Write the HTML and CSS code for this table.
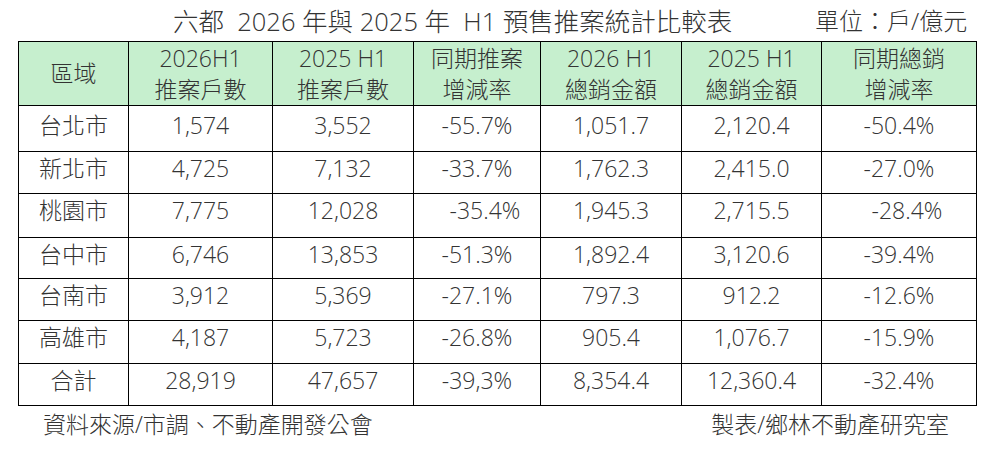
FILE: index.html
```html
<!DOCTYPE html>
<html lang="zh-Hant">
<head>
<meta charset="utf-8">
<title>六都 預售推案統計比較表</title>
<link rel="stylesheet" href="styles.css">
</head>
<body>
<div class="page">
  <div class="title-row">
    <span class="title">六都&nbsp; 2026 年與 2025 年&nbsp; H1 預售推案統計比較表</span>
    <span class="unit">單位：戶/億元</span>
  </div>
  <table class="stats">
    <colgroup>
      <col class="c-area"><col class="c1"><col class="c2"><col class="c3"><col class="c4"><col class="c5"><col class="c6">
    </colgroup>
    <thead>
      <tr>
        <th>區域</th>
        <th>2026H1<br>推案戶數</th>
        <th>2025 H1<br>推案戶數</th>
        <th>同期推案<br>增減率</th>
        <th>2026 H1<br>總銷金額</th>
        <th>2025 H1<br>總銷金額</th>
        <th>同期總銷<br>增減率</th>
      </tr>
    </thead>
    <tbody>
      <tr class="r46 first"><td>台北市</td><td>1,574</td><td>3,552</td><td>-55.7%</td><td>1,051.7</td><td>2,120.4</td><td>-50.4%</td></tr>
      <tr class="r42"><td>新北市</td><td>4,725</td><td>7,132</td><td>-33.7%</td><td>1,762.3</td><td>2,415.0</td><td>-27.0%</td></tr>
      <tr class="r44"><td>桃園市</td><td>7,775</td><td>12,028</td><td class="shift">-35.4%</td><td>1,945.3</td><td>2,715.5</td><td class="shift">-28.4%</td></tr>
      <tr class="r41"><td>台中市</td><td>6,746</td><td>13,853</td><td>-51.3%</td><td>1,892.4</td><td>3,120.6</td><td>-39.4%</td></tr>
      <tr class="r42"><td>台南市</td><td>3,912</td><td>5,369</td><td>-27.1%</td><td>797.3</td><td>912.2</td><td>-12.6%</td></tr>
      <tr class="r43"><td>高雄市</td><td>4,187</td><td>5,723</td><td>-26.8%</td><td>905.4</td><td>1,076.7</td><td>-15.9%</td></tr>
      <tr class="r42"><td>合計</td><td>28,919</td><td>47,657</td><td>-39,3%</td><td>8,354.4</td><td>12,360.4</td><td>-32.4%</td></tr>
    </tbody>
  </table>
  <div class="foot">
    <span>資料來源/市調、不動產開發公會</span>
    <span>製表/鄉林不動產研究室</span>
  </div>
</div>
</body>
</html>
```
FILE: styles.css
```css
html, body {
  margin: 0;
  padding: 0;
  background: #ffffff;
}
body {
  font-family: "Open Sans", "Noto Sans CJK TC", sans-serif;
  font-weight: 300;
  color: #333333;
  font-size: 23px;
}
.page {
  width: 997px;
  height: 456px;
  overflow: hidden;
}
.title-row {
  height: 41px;
  display: grid;
  grid-template-columns: 642px auto;
  align-items: start;
  padding-left: 173px;
  box-sizing: border-box;
  overflow: hidden;
}
.title {
  font-size: 25.5px;
  line-height: 42px;
  white-space: pre;
}
.unit {
  font-size: 24px;
  line-height: 42px;
}
.stats {
  margin-left: 18px;
  width: 958px;
  border-collapse: collapse;
  table-layout: fixed;
}
.c-area { width: 110px; }
.c1 { width: 144px; }
.c2 { width: 141px; }
.c3 { width: 127px; }
.c4 { width: 141px; }
.c5 { width: 140px; }
.c6 { width: 155px; }
.stats th, .stats td {
  border: 1px solid #000;
  text-align: center;
  padding: 0;
  font-weight: 300;
}
.stats th {
  background: #c6efce;
  height: 63px;
  line-height: 31px;
  vertical-align: middle;
}
.stats td {
  vertical-align: top;
  line-height: 28px;
  padding-top: 2px;
}
.stats tr.first td { padding-top: 5px; }
.r46 td { height: 40px; }
.r44 td { height: 41px; }
.r43 td { height: 40px; }
.r42 td { height: 39px; }
.r41 td { height: 38px; }
.stats td.shift { padding-left: 16px; }
.foot {
  display: flex;
  justify-content: space-between;
  padding: 1px 48px 0 43px;
  line-height: 34px;
  font-size: 23px;
}
```
